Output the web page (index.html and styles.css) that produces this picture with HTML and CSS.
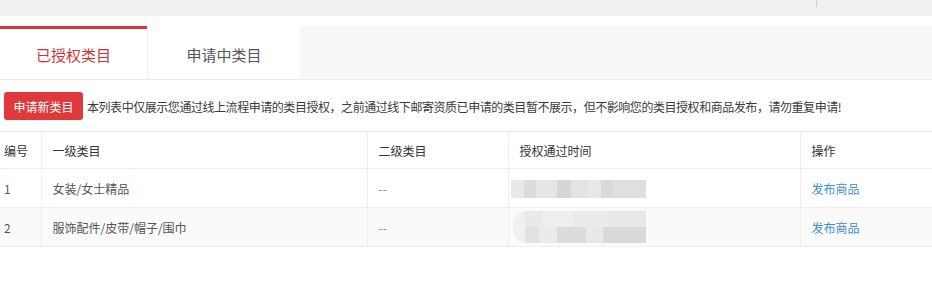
FILE: index.html
```html
<!DOCTYPE html>
<html lang="zh-CN">
<head>
<meta charset="utf-8">
<title>类目授权</title>
<link rel="stylesheet" href="styles.css">
</head>
<body>
<div class="topbar"><span class="divider"></span></div>
<div class="tabs">
  <div class="tab active">已授权类目</div>
  <div class="tab">申请中类目</div>
</div>
<div class="notice">
  <button class="btn-apply">申请新类目</button>
  <span class="notice-text">本列表中仅展示您通过线上流程申请的类目授权，之前通过线下邮寄资质已申请的类目暂不展示，但不影响您的类目授权和商品发布，请勿重复申请!</span>
</div>
<table class="grid">
  <colgroup>
    <col class="c1"><col class="c2"><col class="c3"><col class="c4"><col class="c5">
  </colgroup>
  <thead>
    <tr><th class="first">编号</th><th>一级类目</th><th>二级类目</th><th>授权通过时间</th><th>操作</th></tr>
  </thead>
  <tbody>
    <tr class="r1"><td class="first">1</td><td>女装/女士精品</td><td class="dash">--</td><td><span class="blur blur-a"></span></td><td><a class="link" href="#">发布商品</a></td></tr>
    <tr class="r2"><td class="first">2</td><td>服饰配件/皮带/帽子/围巾</td><td class="dash">--</td><td><span class="blur blur-b"></span></td><td><a class="link" href="#">发布商品</a></td></tr>
  </tbody>
</table>
</body>
</html>
```
FILE: styles.css
```css
html, body {
  margin: 0;
  padding: 0;
  background: #fff;
  font-family: "Noto Sans CJK SC", "Noto Sans", "Liberation Sans", sans-serif;
  font-size: 12px;
  color: #333;
}

.topbar {
  height: 16px;
  background: #f1f1f1;
  display: flex;
  justify-content: flex-end;
  padding-right: 115px;
}
.divider {
  width: 1px;
  height: 7px;
  background: #cfcfcf;
}

.tabs {
  margin-top: 10px;
  height: 54px;
  background: #f8f8f8;
  border-bottom: 1px solid #ececec;
  display: flex;
  box-sizing: border-box;
}
.tab {
  width: 153px;
  background: #fff;
  border-left: 1px solid #f0f0f0;
  display: flex;
  align-items: center;
  justify-content: center;
  font-size: 15px;
  color: #555;
  box-sizing: border-box;
  padding-top: 3px;
}
.tab.active {
  width: 147px;
  border-left: none;
  border-top: 3px solid #d4373a;
  color: #cf3338;
  padding-top: 0;
}

.notice {
  display: flex;
  align-items: center;
  gap: 4px;
  padding: 12px 0 11px 4px;
}
.btn-apply {
  width: 79px;
  height: 28px;
  border: none;
  border-radius: 3px;
  background: #e0393c;
  color: #fff;
  font-family: inherit;
  font-size: 12px;
  padding: 0;
}
.notice-text {
  font-size: 12px;
  letter-spacing: -0.45px;
  color: #3a3a3a;
  white-space: nowrap;
}

.grid {
  width: 932px;
  border-collapse: collapse;
  table-layout: fixed;
  border-top: 1px solid #eaeaea;
}
.c1 { width: 41px; }
.c2 { width: 326px; }
.c3 { width: 141px; }
.c4 { width: 292px; }
.c5 { width: 132px; }

.grid th, .grid td {
  text-align: left;
  padding: 0 11px;
  border-left: 1px solid #eeeeee;
  border-bottom: 1px solid #eeeeee;
  font-size: 12px;
  white-space: nowrap;
}
.grid th.first, .grid td.first {
  border-left: none;
  padding-left: 4px;
}
.grid th {
  height: 36px;
  font-weight: normal;
  color: #333;
  background: #fff;
}
.grid td {
  height: 38px;
  color: #555;
}
.grid td.dash { color: #888; }
.r2 td { background: #fafafa; }

.link {
  color: #3b8fd4;
  text-decoration: none;
}

.blur {
  display: inline-block;
  vertical-align: middle;
  margin-left: -9px;
}
.blur-a {
  width: 135px;
  height: 18px;
  background: linear-gradient(to right,
    #e9e9e9 0, #e9e9e9 13px,
    #dcdcdc 13px, #dcdcdc 25px,
    #e6e6e6 25px, #e6e6e6 46px,
    #d6d6d6 46px, #d6d6d6 60px,
    #e3e3e3 60px, #e3e3e3 77px,
    #e8e8e8 77px, #e8e8e8 90px,
    #d9d9d9 90px, #d9d9d9 102px,
    #dfdfdf 102px, #dfdfdf 135px);
}
.blur-b {
  width: 133px;
  height: 32px;
  margin-left: -7px;
  border-radius: 14px 0 0 14px;
  background:
    linear-gradient(to right,
      #f0f0f0 0, #f0f0f0 12px,
      #e9e9e9 12px, #e9e9e9 30px,
      #eeeeee 30px, #eeeeee 60px,
      #ebebeb 60px, #ebebeb 95px,
      #e8e8e8 95px, #e8e8e8 133px) top / 100% 50% no-repeat,
    linear-gradient(to right,
      #f0f0f0 0, #f0f0f0 12px,
      #e2e2e2 12px, #e2e2e2 26px,
      #ebebeb 26px, #ebebeb 44px,
      #dcdcdc 44px, #dcdcdc 73px,
      #e8e8e8 73px, #e8e8e8 90px,
      #dadada 90px, #dadada 133px) bottom / 100% 50% no-repeat;
}
```
